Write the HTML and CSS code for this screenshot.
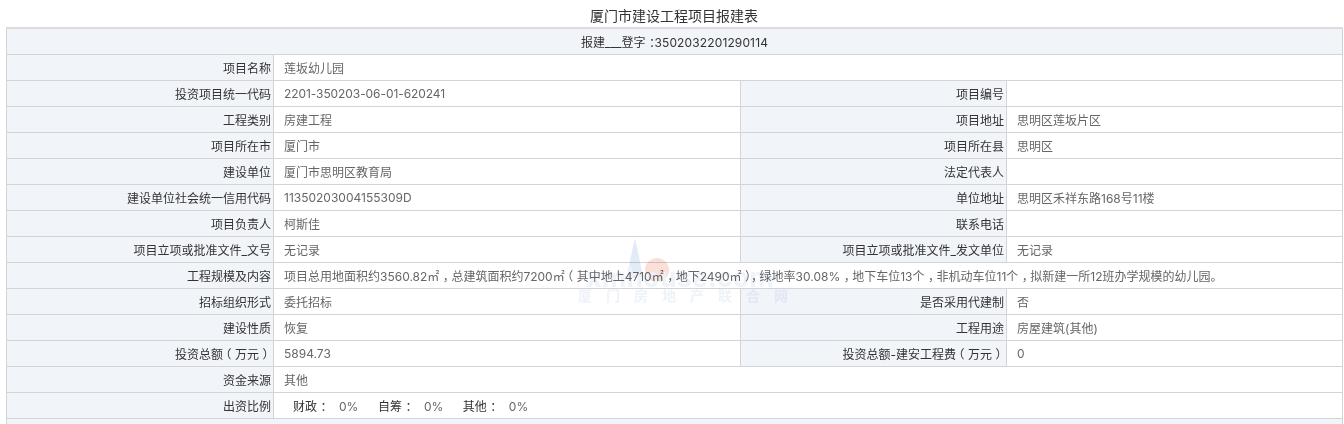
FILE: index.html
```html
<!DOCTYPE html>
<html lang="zh-CN">
<head>
<meta charset="utf-8">
<title>厦门市建设工程项目报建表</title>
<link rel="stylesheet" href="styles.css">
</head>
<body>
<div class="sheet">
  <h1 class="title">厦门市建设工程项目报建表</h1>
  <table class="grid">
    <colgroup><col class="c1"><col class="c2"><col class="c3"><col class="c4"></colgroup>
    <tr><th class="head" colspan="4">报建___登字<span class="m">：</span><span class="code">3502032201290114</span></th></tr>
    <tr><th>项目名称</th><td colspan="3">莲坂幼儿园</td></tr>
    <tr><th>投资项目统一代码</th><td class="tight">2201-350203-06-01-620241</td><th>项目编号</th><td></td></tr>
    <tr><th>工程类别</th><td>房建工程</td><th>项目地址</th><td>思明区莲坂片区</td></tr>
    <tr><th>项目所在市</th><td>厦门市</td><th>项目所在县</th><td>思明区</td></tr>
    <tr><th>建设单位</th><td>厦门市思明区教育局</td><th>法定代表人</th><td></td></tr>
    <tr><th>建设单位社会统一信用代码</th><td>11350203004155309D</td><th>单位地址</th><td>思明区禾祥东路168号11楼</td></tr>
    <tr><th>项目负责人</th><td>柯斯佳</td><th>联系电话</th><td></td></tr>
    <tr><th>项目立项或批准文件_文号</th><td>无记录</td><th>项目立项或批准文件_发文单位</th><td>无记录</td></tr>
    <tr><th>工程规模及内容</th><td colspan="3">项目总用地面积约3560.82㎡<span class="m">，</span>总建筑面积约7200㎡<span class="o">（</span>其中地上4710㎡<span class="m">，</span>地下2490㎡<span class="m">）</span><span class="m">，</span>绿地率30.08%<span class="m">，</span>地下车位13个<span class="m">，</span>非机动车位11个<span class="m">，</span>拟新建一所12班办学规模的幼儿园。</td></tr>
    <tr><th>招标组织形式</th><td>委托招标</td><th>是否采用代建制</th><td>否</td></tr>
    <tr><th>建设性质</th><td>恢复</td><th>工程用途</th><td>房屋建筑(其他)</td></tr>
    <tr><th>投资总额<span class="o">（</span>万元<span class="m">）</span></th><td>5894.73</td><th>投资总额-建安工程费<span class="o">（</span>万元<span class="m">）</span></th><td>0</td></tr>
    <tr><th>资金来源</th><td colspan="3">其他</td></tr>
    <tr><th>出资比例</th><td colspan="3"><div class="ratios"><span><b>财政<span class="m">：</span></b>0%</span><span><b>自筹<span class="m">：</span></b>0%</span><span><b>其他<span class="m">：</span></b>0%</span></div></td></tr>
    <tr><th class="foot" colspan="4"></th></tr>
  </table>
  <div class="mark" aria-hidden="true">
    <svg class="mark-logo" viewBox="0 0 100 46" width="100" height="46"><path d="M49 40 L53 18 L57 0 L61 18 L65 40 Z" fill="#e3ecf6"/><circle cx="79" cy="32" r="12" fill="#fbe0da"/></svg>
    <div class="mark-url">xmhouse.com</div>
    <div class="mark-text">厦门房地产联合网</div>
  </div>
</div>
</body>
</html>
```
FILE: styles.css
```css
html, body { margin: 0; padding: 0; background: #fff; }
body { height: 424px; overflow: hidden; font-family: "Inter", "Noto Sans CJK SC", sans-serif; font-size: 12px; color: #666; }
.sheet { position: relative; padding: 0 2px 0 6px; }
.title { margin: 0; height: 27px; line-height: 32px; font-size: 14px; font-weight: 400; color: #333; text-align: center; }
.grid { width: 1336px; table-layout: fixed; border-collapse: collapse; border-top: 2px solid #ddd; background: transparent; }
.c1 { width: 267px; } .c2 { width: 467px; } .c3 { width: 266px; } .c4 { width: 336px; }
.grid tr { height: 26px; }
.grid th, .grid td { border: 1px solid #d4d4d4; padding: 0 3px 0 10px; height: 25px; font-size: 12px; font-weight: 400; white-space: nowrap; }
.grid th { background: #f1f4f9; color: #333; text-align: right; padding: 0 2px 0 0; }
.grid th.head { text-align: center; padding: 0; }
.m { margin-left: 3.5px; margin-right: -3.5px; }
.o { margin-left: -3.5px; margin-right: 3.5px; }
.code { margin-left: -3px; letter-spacing: .13px; }
.grid td.tight { letter-spacing: -.08px; }
.ratios { display: flex; gap: 19.5px; padding-left: 9px; }
.ratios b { font-weight: 400; color: #333; margin-right: 10px; }
.mark { position: absolute; left: 578px; top: 238px; width: 210px; height: 66px; pointer-events: none; mix-blend-mode: multiply; }
.mark-logo { display: block; }
.mark-url { position: absolute; left: 8px; top: 24px; font-size: 27px; line-height: 32px; font-weight: 700; color: #eef3f9; white-space: nowrap; }
.mark-text { position: absolute; left: 0; top: 50px; font-size: 14px; line-height: 16px; letter-spacing: 14px; color: #eef3f9; white-space: nowrap; font-weight: 700; }
```
